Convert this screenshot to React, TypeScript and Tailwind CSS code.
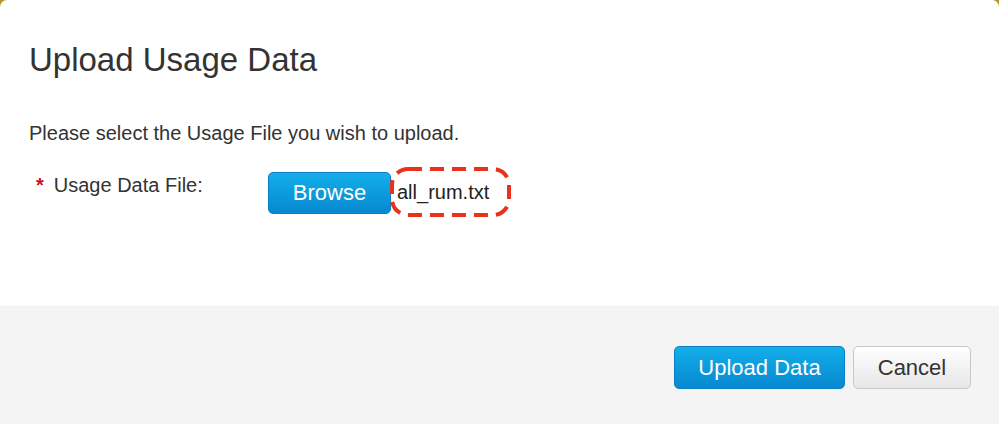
import React from "react";

export default function App() {
  return (
    <div className="w-[999px] h-[424px] bg-[#b3962c] overflow-hidden" style={{ fontFamily: '"Liberation Sans", Arial, sans-serif' }}>
      <div className="w-full h-full bg-white rounded-t-[7px] flex flex-col overflow-hidden">
        <div className="h-[306px] px-[29px] pt-[41px] text-[#333]">
          <h1 className="text-[33px] leading-[38px] text-[#333]">Upload Usage Data</h1>
          <p className="mt-[42px] text-[20px] leading-[24px] text-[#333]">Please select the Usage File you wish to upload.</p>
          <div className="mt-[27px] flex items-start">
            <div className="w-[239px] flex items-center pt-[1px] pl-[7px]">
              <span className="text-[#c8102e] text-[20px] leading-[24px] mr-[10px] font-bold">*</span>
              <span className="text-[20px] leading-[24px]">Usage Data File:</span>
            </div>
            <div className="flex items-center">
              <button className="w-[123px] h-[42px] rounded-[5px] border border-[#0a7fc2] bg-gradient-to-b from-[#14aeea] to-[#0888d0] text-white text-[22px] leading-none">Browse</button>
              <div className="relative ml-[6px]">
                <span className="text-[20px] leading-[24px] text-[#222]">all_rum.txt</span>
                <svg className="absolute left-[-7px] top-[-13px]" width="122" height="50" viewBox="0 0 122 50">
                  <rect x="2" y="2" width="117" height="46" rx="16" ry="16" fill="none" stroke="#e8321c" strokeWidth="4" strokeDasharray="14 8" />
                </svg>
              </div>
            </div>
          </div>
        </div>
        <div className="flex-1 bg-[#f4f4f4] border-t border-[#efefef] flex items-start justify-end pt-[39px] pr-[28px] gap-[8px]">
          <button className="w-[171px] h-[43px] rounded-[5px] border border-[#0a7fc2] bg-gradient-to-b from-[#14aeea] to-[#0888d0] text-white text-[22px] leading-none">Upload Data</button>
          <button className="w-[118px] h-[43px] rounded-[5px] border border-[#c8c8c8] bg-gradient-to-b from-[#ffffff] to-[#e6e6e6] text-[#333] text-[22px] leading-none">Cancel</button>
        </div>
      </div>
    </div>
  );
}
